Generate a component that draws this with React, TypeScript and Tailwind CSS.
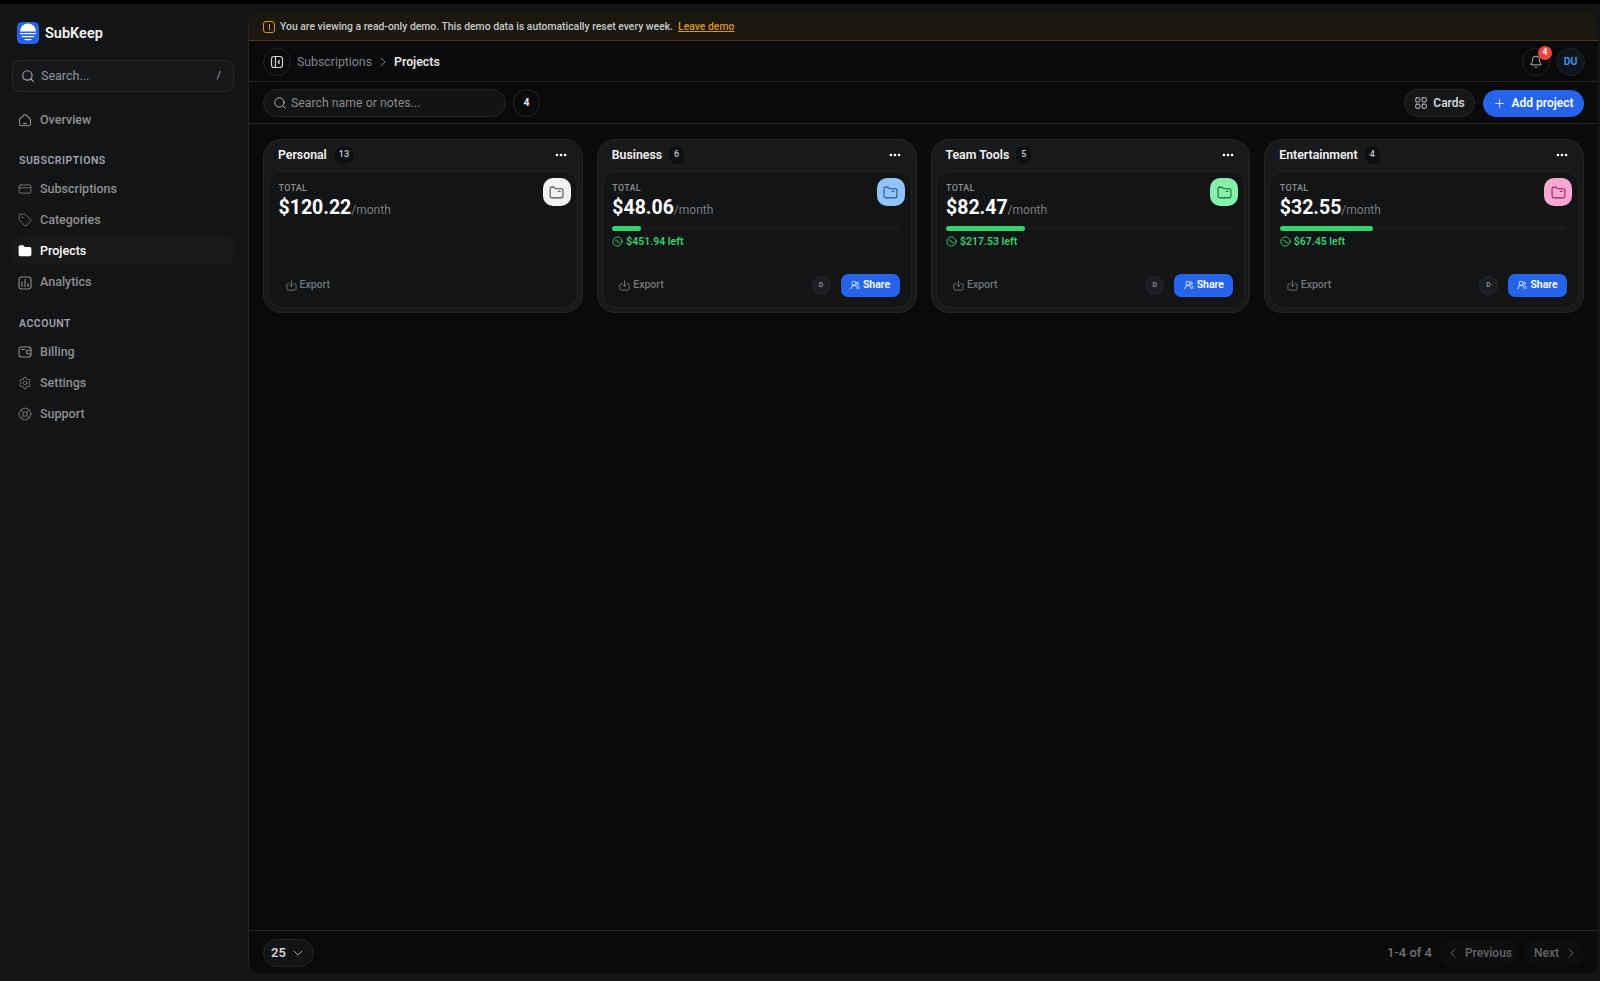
import React from 'react';
import {
  Search,
  CreditCard,
  Tag,
  Folder,
  Settings,
  LifeBuoy,
  ChevronRight,
  ChevronLeft,
  ChevronDown,
  Bell,
  LayoutGrid,
  Plus,
  Ellipsis,
  UsersRound,
} from 'lucide-react';

interface Project {
  name: string;
  count: number;
  total: string;
  left?: string;
  percent?: number;
  tile: string;
  tileIcon: string;
}

const projects: Project[] = [
  { name: 'Personal', count: 13, total: '$120.22', tile: 'bg-[#f1f1f1]', tileIcon: 'text-[#4b4b4b]' },
  { name: 'Business', count: 6, total: '$48.06', left: '$451.94 left', percent: 10, tile: 'bg-[#93c5fd]', tileIcon: 'text-[#1e4f8a]' },
  { name: 'Team Tools', count: 5, total: '$82.47', left: '$217.53 left', percent: 27.5, tile: 'bg-[#86efac]', tileIcon: 'text-[#166534]' },
  { name: 'Entertainment', count: 4, total: '$32.55', left: '$67.45 left', percent: 32.5, tile: 'bg-[#f9a8d4]', tileIcon: 'text-[#9d174d]' },
];

function Logo() {
  return (
    <svg width="22" height="22" viewBox="0 0 22 22">
      <rect width="22" height="22" rx="5" fill="#2563eb" />
      <path d="M3 9.500a8 8 0 0 1 16 0z" fill="#fff" />
      <path d="M3 11h16v1.200H3z" fill="#fff" />
      <path d="M4.500 14h13l-.8 1.300H5.300z" fill="#fff" />
      <path d="M7 17h8l-1.500 1.200h-5z" fill="#fff" />
    </svg>
  );
}

function HomeIcon() {
  return (
    <svg width="14" height="14" viewBox="0 0 14 14" fill="none" stroke="currentColor" strokeWidth="1.100" strokeLinejoin="round" strokeLinecap="round">
      <path d="M1.500 6.200 6 2a1.500 1.500 0 0 1 2 0l4.500 4.200V11a1.800 1.800 0 0 1-1.800 1.800H3.300A1.800 1.800 0 0 1 1.500 11z" />
      <path d="M5.500 10.600h3" />
    </svg>
  );
}

function BarsIcon() {
  return (
    <svg width="14" height="14" viewBox="0 0 14 14" fill="none" stroke="currentColor" strokeWidth="1.100" strokeLinecap="round">
      <rect x="1" y="1" width="12" height="12" rx="2.500" />
      <path d="M4 6v4.500M7 3.500v7M10 7.500v3" />
    </svg>
  );
}

function WalletIcon() {
  return (
    <svg width="14" height="14" viewBox="0 0 14 14" fill="none" stroke="currentColor" strokeWidth="1.100" strokeLinecap="round" strokeLinejoin="round">
      <rect x="1" y="2" width="12" height="10" rx="2.500" />
      <path d="M13 5H10.500a2 2 0 0 0 0 4H13" />
      <path d="M3.500 4.500h3" />
    </svg>
  );
}

function ExportIcon() {
  return (
    <svg width="11" height="11" viewBox="0 0 12 12" fill="none" stroke="currentColor" strokeWidth="1" strokeLinecap="round" strokeLinejoin="round">
      <path d="M6 1v6M4.500 5.500 6 7l1.500-1.500" />
      <path d="M3.500 4H2.500A1.500 1.500 0 0 0 1 5.500v4A1.500 1.500 0 0 0 2.500 11h7A1.500 1.500 0 0 0 11 9.500v-4A1.500 1.500 0 0 0 9.500 4h-1" />
    </svg>
  );
}

function LeftIcon() {
  return (
    <svg width="11" height="11" viewBox="0 0 12 12" fill="none" stroke="currentColor" strokeWidth="1" strokeLinecap="round" strokeLinejoin="round">
      <circle cx="6" cy="6" r="5" />
      <path d="M3.500 4.500h1.500L7 7.500h1.500" />
    </svg>
  );
}

function FolderIcon({ className }: { className: string }) {
  return (
    <svg className={className} width="15" height="15" viewBox="0 0 14 14" fill="none" stroke="currentColor" strokeWidth="1" strokeLinecap="round" strokeLinejoin="round">
      <path d="M1 3.500A1.500 1.500 0 0 1 2.500 2h2.200l1.300 1.500h5.500A1.500 1.500 0 0 1 13 5v5.500a1.500 1.500 0 0 1-1.500 1.500h-9A1.500 1.500 0 0 1 1 10.500z" />
      <path d="M8.500 5.800h2" />
    </svg>
  );
}

function NavRow({ icon, label, active }: { icon: React.ReactNode; label: string; active?: boolean }) {
  return (
    <div className={`flex items-center gap-[8px] h-[28px] mb-[3.200px] px-[6px] rounded-lg text-[12.500px] font-medium ${active ? 'bg-[#18191b] text-white' : 'text-[#8f8f8f]'}`}>
      <span className="w-[14px] flex justify-center">{icon}</span>
      {label}
    </div>
  );
}

function SectionLabel({ children }: { children: React.ReactNode }) {
  return <div className="px-[7px] h-[20px] flex items-center text-[10.500px] font-semibold tracking-[0.5px] text-[#a1a1aa] mb-[4px]">{children}</div>;
}

function ProjectCard({ project }: { project: Project }) {
  return (
    <div className="h-[174px] rounded-[18px] bg-[#18191b] border border-[#232427] px-[4px] pb-[4px] flex flex-col">
      <div className="h-[31px] pb-[1px] shrink-0 flex items-center pl-[10px] pr-[10px]">
        <span className="text-[12.300px] font-semibold text-[#f4f4f5]">{project.name}</span>
        <span className="ml-[7px] px-[5px] h-[18px] rounded-full bg-[#0d0e10] text-[9px] font-medium text-[#c4c9d4] flex items-center justify-center">{project.count}</span>
        <Ellipsis className="ml-auto text-white" size={14} strokeWidth={2.5} />
      </div>
      <div className="relative flex-1 rounded-[14px] bg-[#131416] border border-[#202124] pt-[10px] pl-[9.500px] pr-[11px] pb-[10.500px] flex flex-col">
        <div className={`absolute top-[6px] right-[6px] w-[28px] h-[28px] rounded-[10px] flex items-center justify-center ${project.tile}`}>
          <FolderIcon className={project.tileIcon} />
        </div>
        <div className="text-[9px] leading-[12px] font-medium text-[#8f8f8f] tracking-[0.3px]">TOTAL</div>
        <div className="flex items-baseline leading-[27px]">
          <span className="text-[19.500px] font-bold text-white">{project.total}</span>
          <span className="text-[12px] text-[#7a7a7a]">/month</span>
        </div>
        {project.left && (
          <>
            <div className="mt-[2px] h-[5px] rounded-full bg-[#18191b]">
              <div className="h-full rounded-full bg-[#34d36c]" style={{ width: `${project.percent}%` }} />
            </div>
            <div className="mt-[3px] flex items-center gap-[3px] text-[10.500px] font-semibold text-[#34d36c]">
              <LeftIcon />
              {project.left}
            </div>
          </>
        )}
        <div className="mt-auto flex items-center h-[23px]">
          <div className="ml-[7px] flex items-center gap-[3px] text-[10.500px] font-medium text-[#757575]">
            <ExportIcon />
            Export
          </div>
          {project.left && (
            <>
              <div className="ml-auto w-[19px] h-[19px] rounded-full bg-[#1c1d20] border border-[#26272a] text-[7px] font-semibold text-[#8f8f8f] flex items-center justify-center">D</div>
              <div className="ml-[10px] w-[59px] h-[23px] rounded-[7px] bg-[#2563eb] text-white text-[10.500px] font-semibold flex items-center justify-center gap-[3px]">
                <UsersRound size={10} />
                Share
              </div>
            </>
          )}
        </div>
      </div>
    </div>
  );
}

export default function App() {
  return (
    <div className="w-[1600px] h-[981px] overflow-hidden bg-[#131416] flex flex-col font-['Roboto',sans-serif]">
      <div className="h-1 bg-black shrink-0" />
      <div className="flex-1 flex min-h-0">
        <aside className="w-[248px] shrink-0 pt-[18px] pl-[12px] pr-[14px]">
          <div className="flex items-center gap-[6px] pl-[5px] h-[22px]">
            <Logo />
            <span className="text-[14.500px] font-semibold text-[#f4f4f5] pt-[1px]">SubKeep</span>
          </div>
          <div className="mt-[16px] h-[32px] rounded-lg border border-[#26272a] bg-[#17181a] flex items-center px-[8px] gap-[6px] text-[12.500px] text-[#8b93a1]">
            <Search size={14} className="text-[#a1a1aa]" />
            Search...
            <span className="ml-auto mr-[4px] text-[#a1a1aa] text-[11px]">/</span>
          </div>
          <div className="mt-[14px]">
            <NavRow icon={<HomeIcon />} label="Overview" />
          </div>
          <div className="mt-[17px]">
            <SectionLabel>SUBSCRIPTIONS</SectionLabel>
            <NavRow icon={<CreditCard size={14} strokeWidth={1.25} />} label="Subscriptions" />
            <NavRow icon={<Tag size={14} strokeWidth={1.25} />} label="Categories" />
            <NavRow icon={<Folder size={14} fill="currentColor" />} label="Projects" active />
            <NavRow icon={<BarsIcon />} label="Analytics" />
          </div>
          <div className="mt-[17.500px]">
            <SectionLabel>ACCOUNT</SectionLabel>
            <NavRow icon={<WalletIcon />} label="Billing" />
            <NavRow icon={<Settings size={14} strokeWidth={1.25} />} label="Settings" />
            <NavRow icon={<LifeBuoy size={14} strokeWidth={1.25} />} label="Support" />
          </div>
        </aside>

        <main className="flex-1 mt-2 mb-2 mr-[2px] rounded-l-[10px] rounded-r-[10px] bg-[#0a0a0a] border-l border-[#232427] flex flex-col overflow-hidden">
          <div className="h-[29px] shrink-0 bg-[#1a1710] border-b border-[#4a3a10] flex items-center pl-[14px] pt-[1px] gap-[5px] text-[10.400px] font-medium text-[#c9c9c9]">
            <span className="w-[12px] h-[12px] rounded-[3px] border border-[#d99a0f] flex items-center justify-center">
              <span className="w-px h-[6px] bg-[#d99a0f]" />
            </span>
            <span>You are viewing a read-only demo. This demo data is automatically reset every week.</span>
            <span className="text-[#d99a0f] underline">Leave demo</span>
          </div>

          <div className="h-[41px] shrink-0 border-b border-[#232427] flex items-center pl-[14px] pr-[13px] pt-[1px]">
            <div className="w-[28px] h-[28px] rounded-full border border-[#232427] flex items-center justify-center text-[#d4d4d8]">
              <svg width="14" height="14" viewBox="0 0 14 14" fill="none" stroke="currentColor" strokeWidth="1.200" strokeLinecap="round" strokeLinejoin="round">
                <rect x="1.500" y="1.500" width="11" height="11" rx="2.500" />
                <path d="M5.500 1.500v11M9.500 5.500 8 7l1.500 1.500" />
              </svg>
            </div>
            <span className="ml-[6px] mt-[1px] text-[12.300px] text-[#80858e]">Subscriptions</span>
            <ChevronRight size={16} className="mx-[3px] mt-[1px] text-[#80858e]" strokeWidth={1.5} />
            <span className="mt-[1px] text-[12.300px] font-semibold text-[#e4e4e7]">Projects</span>
            <div className="relative ml-auto w-[28px] h-[28px] rounded-full border border-[#232427] flex items-center justify-center text-[#d4d4d8]">
              <Bell size={14} strokeWidth={1.5} />
              <span className="absolute top-[-3px] right-[-3px] w-[14px] h-[14px] rounded-full bg-[#ef4444] text-white text-[8.500px] font-bold flex items-center justify-center">4</span>
            </div>
            <div className="ml-[6px] w-[29px] h-[28px] rounded-full bg-[#10141c] border border-[#1c2230] flex items-center justify-center text-[10.500px] font-bold text-[#3f8fe0]">DU</div>
          </div>

          <div className="h-[42px] shrink-0 border-b border-[#232427] flex items-center pl-[14px] pr-[14px] pt-[1px]">
            <div className="w-[243px] h-[28px] rounded-full border border-[#232427] bg-[#121315] flex items-center pl-[9px] gap-[4px] text-[12.300px] text-[#8a8a8a]">
              <Search size={14} strokeWidth={1.5} className="text-[#c4c4c4]" />
              Search name or notes...
            </div>
            <div className="ml-[7px] w-[27px] h-[28px] rounded-full border border-[#232427] flex items-center justify-center text-[10.500px] font-bold text-[#e4e4e7]">4</div>
            <div className="ml-auto w-[71px] h-[28px] rounded-full border border-[#26272a] bg-[#151618] flex items-center justify-center gap-[5px] text-[12px] font-semibold text-[#d4d4d8]">
              <LayoutGrid size={14} strokeWidth={1.5} />
              Cards
            </div>
            <div className="ml-[8px] w-[101px] h-[27px] rounded-full bg-[#2563eb] flex items-center justify-center gap-[5px] text-[12px] font-semibold text-white">
              <Plus size={13} strokeWidth={1.5} />
              Add project
            </div>
          </div>

          <div className="flex-1 min-h-0 pt-[15px] pl-[14px] pr-[14px]">
            <div className="grid grid-cols-4 gap-[14px]">
              {projects.map((project) => (
                <ProjectCard key={project.name} project={project} />
              ))}
            </div>
          </div>

          <div className="h-[43px] shrink-0 border-t border-[#232427] flex items-center pl-[14px] pr-[14px] pt-[1px]">
            <div className="w-[51px] h-[28px] rounded-full border border-[#232427] bg-[#121315] flex items-center justify-center gap-[4px] text-[13px] font-semibold text-[#d4d4d8]">
              25
              <ChevronDown size={16} strokeWidth={1.5} className="text-[#a1a1aa]" />
            </div>
            <span className="ml-auto text-[13px] font-medium text-[#71717a]">1-4 of 4</span>
            <div className="ml-[7px] w-[80px] h-[28px] rounded-full bg-[#0d0e0f] pr-[7px] flex items-center justify-end gap-[4px] text-[12px] font-semibold text-[#5f5f5f]">
              <ChevronLeft size={16} strokeWidth={1.5} />
              Previous
            </div>
            <div className="ml-[5px] w-[60px] h-[28px] rounded-full bg-[#0d0e0f] pr-[5px] flex items-center justify-end gap-[4px] text-[12px] font-semibold text-[#5f5f5f]">
              Next
              <ChevronRight size={16} strokeWidth={1.5} />
            </div>
          </div>
        </main>
      </div>
    </div>
  );
}
